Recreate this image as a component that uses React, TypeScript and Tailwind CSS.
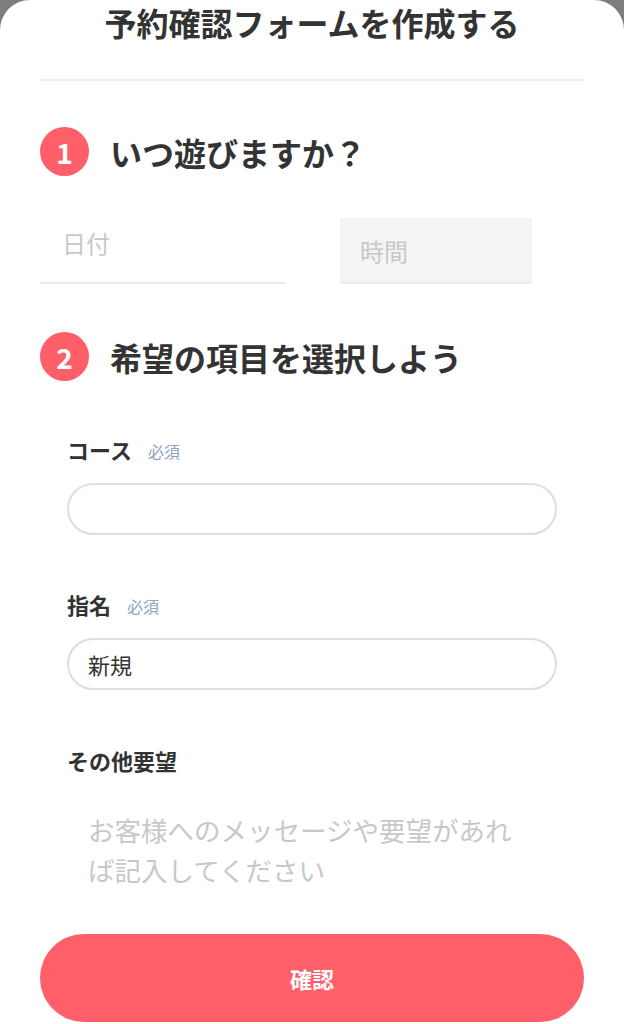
import React from "react";

const font = { fontFamily: '"Noto Sans CJK JP", "Noto Sans", sans-serif' };

function StepHeading({ n, text, className }: { n: string; text: string; className?: string }) {
  return (
    <div className={"flex items-center " + (className ?? "")}>
      <div className="w-[49px] h-[49px] rounded-full bg-[#ff5f68] flex items-center justify-center text-white font-bold text-[28px] leading-none">
        {n}
      </div>
      <div className="ml-[21px] text-[32px] font-bold text-[#333333] leading-none">{text}</div>
    </div>
  );
}

function Label({ text, required }: { text: string; required?: boolean }) {
  return (
    <div className="flex items-end h-[24px]">
      <span className="text-[22px] font-bold text-[#333333] leading-none">{text}</span>
      {required && <span className="ml-[16px] text-[16px] text-[#8ca6c4] leading-none mb-[1px]">必須</span>}
    </div>
  );
}

export default function App() {
  return (
    <div className="w-[624px] h-[1024px] bg-[#7d7d7d] overflow-hidden" style={font}>
      <div className="h-full bg-white rounded-t-[30px] px-10">
        <h1 className="text-center text-[32px] font-bold leading-[44px] text-[#333333]">予約確認フォームを作成する</h1>
        <div className="mt-[35px] h-[2px] bg-[#ebebeb]" />

        <StepHeading n="1" text="いつ遊びますか？" className="mt-[46px]" />

        <div className="mt-[42px] flex">
          <div className="w-[246px] h-[66px] border-b-2 border-[#ebebeb] pl-[22px] pt-[10px] text-[24px] text-[#c8c8c8] leading-[30px]">
            日付
          </div>
          <div className="ml-[54px] w-[192px] h-[66px] bg-[#f4f4f4] border-b-2 border-[#ebebeb] pl-[20px] pt-[18px] text-[24px] text-[#c8c8c8] leading-[30px]">
            時間
          </div>
        </div>

        <StepHeading n="2" text="希望の項目を選択しよう" className="mt-[48px]" />

        <div className="pl-[27px] pr-[27px]">
          <div className="mt-[55px]">
            <Label text="コース" required />
          </div>
          <div className="mt-[23px] h-[52px] rounded-full border-2 border-[#dedede]" />

          <div className="mt-[56px]">
            <Label text="指名" required />
          </div>
          <div className="mt-[23px] h-[52px] rounded-full border-2 border-[#dedede] flex items-center pl-[19px] text-[22px] text-[#333333]">
            新規
          </div>

          <div className="mt-[57px]">
            <Label text="その他要望" />
          </div>
          <div className="mt-[39px] pl-[21px] w-[455px] text-[26.5px] leading-[40px] text-[#c8c8c8]">
            お客様へのメッセージや要望があれば記入してください
          </div>
        </div>

        <button className="mt-[44px] w-full h-[88px] rounded-full bg-[#ff5f68] text-white text-[22px] font-bold">
          確認
        </button>
      </div>
    </div>
  );
}
